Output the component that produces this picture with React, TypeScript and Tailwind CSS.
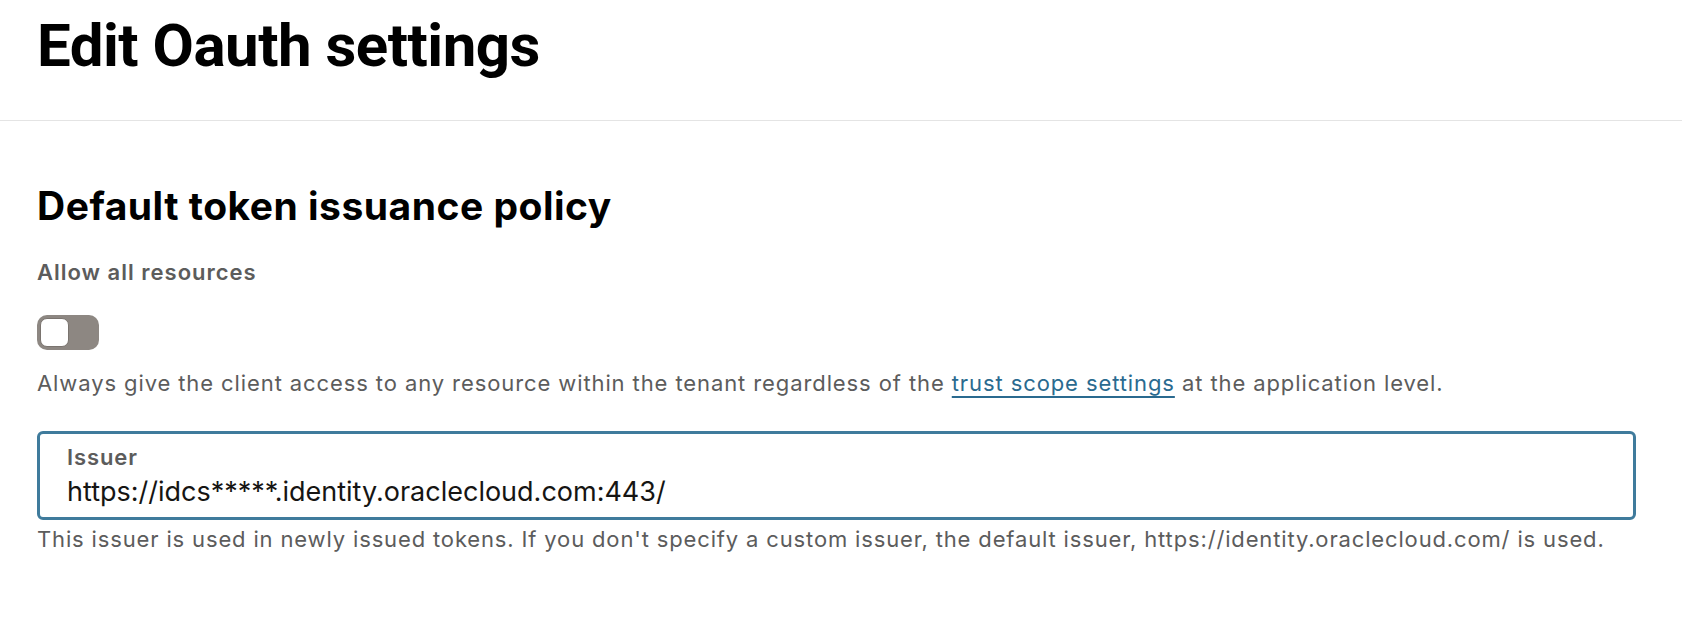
import { useState } from "react";

export default function App() {
  const [allowAll, setAllowAll] = useState(false);

  return (
    <div className="min-h-screen bg-white text-[#161513] font-['Inter','Liberation_Sans',sans-serif]">
      <header className="h-[121px] border-b border-[#e4e4e4] px-[37px] pt-[16px]">
        <h1 className="font-['Roboto','Inter',sans-serif] text-[60px] leading-[60px] font-bold tracking-[-0.5px] text-black">
          Edit Oauth settings
        </h1>
      </header>

      <main className="pl-[37px] pr-[46px] pt-[66px]">
        <h2 className="text-[39px] leading-[38px] font-bold tracking-[0.5px] text-black">
          Default token issuance policy
        </h2>

        <p className="mt-[36px] text-[22px] leading-[22px] font-semibold tracking-[1px] text-[#5c5c5c]">
          Allow all resources
        </p>

        <button
          type="button"
          role="switch"
          aria-checked={allowAll}
          onClick={() => setAllowAll(!allowAll)}
          className={`mt-[32px] flex h-[35px] w-[62px] items-center rounded-[10px] p-[3px] ${
            allowAll ? "justify-end bg-[#2b6a8f]" : "justify-start bg-[#8d8782]"
          }`}
        >
          <span className="h-[29px] w-[29px] rounded-[7px] border border-[#7a746f] bg-white" />
        </button>

        <p className="mt-[22px] whitespace-nowrap text-[22px] leading-[22px] tracking-[0.9px] text-[#5c5c5c]">
          Always give the client access to any resource within the tenant regardless of the{" "}
          <a href="#" className="text-[#2a6a8f] underline decoration-2 underline-offset-[5px]">
            trust scope settings
          </a>{" "}
          at the application level.
        </p>

        <div className="mt-[37px] h-[89px] rounded-[6px] border-[3px] border-[#3f7b9c] px-[27px] pt-[12px]">
          <label className="block text-[22px] leading-[22px] font-semibold tracking-[0.9px] text-[#5c5c5c]">
            Issuer
          </label>
          <div className="mt-[10px] text-[27px] leading-[28px] text-[#161513]">
            https://idcs*****.identity.oraclecloud.com:443/
          </div>
        </div>

        <p className="mt-[8px] whitespace-nowrap text-[22px] leading-[22px] tracking-[0.85px] text-[#5c5c5c]">
          This issuer is used in newly issued tokens. If you don't specify a custom issuer, the default issuer,
          https://identity.oraclecloud.com/ is used.
        </p>
      </main>
    </div>
  );
}
